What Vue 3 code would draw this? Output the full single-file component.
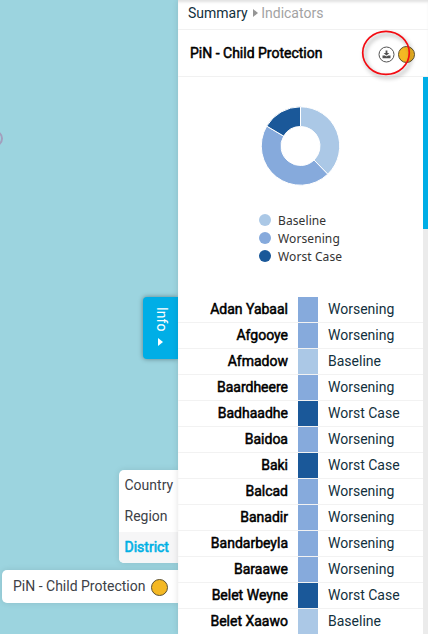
<script setup>
const levels = ['Country', 'Region', 'District']
const activeLevel = 'District'

const colors = {
  Baseline: '#abc8e6',
  Worsening: '#86aadc',
  'Worst Case': '#1a5899',
}
const legend = Object.keys(colors)

const rows = [
  ['Adan Yabaal', 'Worsening'],
  ['Afgooye', 'Worsening'],
  ['Afmadow', 'Baseline'],
  ['Baardheere', 'Worsening'],
  ['Badhaadhe', 'Worst Case'],
  ['Baidoa', 'Worsening'],
  ['Baki', 'Worst Case'],
  ['Balcad', 'Worsening'],
  ['Banadir', 'Worsening'],
  ['Bandarbeyla', 'Worsening'],
  ['Baraawe', 'Worsening'],
  ['Belet Weyne', 'Worst Case'],
  ['Belet Xaawo', 'Baseline'],
]

const point = (r, deg) => {
  const a = (deg * Math.PI) / 180
  return `${(40 + r * Math.sin(a)).toFixed(2)} ${(40 - r * Math.cos(a)).toFixed(2)}`
}
const arc = (from, to) => {
  const big = to - from > 180 ? 1 : 0
  return `M${point(39.2, from)}A39.2 39.2 0 ${big} 1 ${point(39.2, to)}L${point(19.5, to)}A19.5 19.5 0 ${big} 0 ${point(19.5, from)}Z`
}
const slices = [
  { name: 'Baseline', d: arc(0, 136) },
  { name: 'Worsening', d: arc(136, 300.5) },
  { name: 'Worst Case', d: arc(300.5, 360) },
]
</script>

<template>
  <div class="screen">
    <main class="map">
      <span class="marker"></span>
      <button class="info">
        <span>Info</span>
        <svg width="5" height="8" viewBox="0 0 5 8"><path d="M0 0L5 4L0 8z" fill="#fff" /></svg>
      </button>
      <div class="controls">
        <ul class="levels">
          <li v-for="l in levels" :key="l" :class="{ active: l === activeLevel }">{{ l }}</li>
        </ul>
        <div class="layer">
          <span>PiN - Child Protection</span>
          <i class="dot"></i>
        </div>
      </div>
    </main>

    <aside class="panel">
      <nav class="crumbs">
        <span>Summary</span>
        <svg width="5" height="8" viewBox="0 0 5 8"><path d="M0 0L5 4L0 8z" fill="#969696" /></svg>
        <span class="current">Indicators</span>
      </nav>
      <header class="title">
        <h1>PiN - Child Protection</h1>
        <svg class="download" width="17" height="17" viewBox="0 0 17 17">
          <circle cx="8.5" cy="8.5" r="7.5" fill="#fff" stroke="#555" />
          <path d="M7.6 4.5h1.8v2.4h2L8.5 9.6 5.6 6.9h2z" fill="#505050" />
          <path d="M4.5 9.6h2.4l1.6 1 1.6-1h2.4v2.6h-8z" fill="#505050" />
        </svg>
        <i class="dot"></i>
        <svg class="highlight" width="58" height="54" viewBox="0 0 58 54">
          <ellipse cx="27" cy="24.8" rx="23.3" ry="21.5" fill="none" stroke="#f30b12" stroke-width="1.7" />
        </svg>
      </header>
      <div class="body">
        <div class="content">
          <svg class="donut" width="80" height="80" viewBox="0.5 0 80 80">
            <path v-for="s in slices" :key="s.name" :d="s.d" :fill="colors[s.name]" stroke="#fff" stroke-width="1" />
          </svg>
          <ul class="legend">
            <li v-for="name in legend" :key="name">
              <i :style="{ background: colors[name] }"></i>{{ name }}
            </li>
          </ul>
          <div class="table">
            <div v-for="r in rows" :key="r[0]" class="row">
              <strong>{{ r[0] }}</strong>
              <i :style="{ background: colors[r[1]] }"></i>
              <span>{{ r[1] }}</span>
            </div>
          </div>
        </div>
        <div class="scroll"><div class="thumb"></div></div>
      </div>
    </aside>
  </div>
</template>

<style>
body {
  margin: 0;
  overflow: hidden;
}
</style>

<style scoped>
* {
  box-sizing: border-box;
}
.screen {
  display: flex;
  width: 428px;
  height: 634px;
  overflow: hidden;
  font-family: Roboto, sans-serif;
  font-size: 14px;
  color: #12303d;
}
ul {
  list-style: none;
  margin: 0;
  padding: 0;
}
.map {
  position: relative;
  width: 178px;
  background: #9cd4df;
}
.marker {
  position: absolute;
  left: -15px;
  top: 130px;
  width: 18px;
  height: 17px;
  border: 2px solid #a39fbd;
  border-radius: 50%;
}
.info {
  position: absolute;
  left: 143px;
  top: 297px;
  width: 35px;
  height: 62px;
  padding: 10px 0 0;
  display: flex;
  align-items: center;
  gap: 7px;
  writing-mode: vertical-rl;
  border: 0;
  border-radius: 4px 0 0 4px;
  background: #00aee6;
  color: #fff;
  font: 14px/35px Roboto, sans-serif;
  box-shadow: 0 0 5px rgba(0, 0, 0, 0.4);
}
.info span {
  line-height: 35px;
  position: relative;
  left: 1px;
}
.controls {
  position: absolute;
  right: 0;
  bottom: 31px;
  display: flex;
  flex-direction: column;
  align-items: flex-end;
  gap: 7px;
  color: #3d4147;
}
.levels,
.layer {
  background: #fff;
  border-radius: 5px 0 0 5px;
  box-shadow: 0 0 6px rgba(0, 0, 0, 0.1);
  overflow: hidden;
}
.levels {
  width: 59px;
}
.levels li {
  height: 31px;
  padding-left: 5.5px;
  line-height: 31px;
}
.levels .active {
  color: #00b0e4;
  background: #f6f6f7;
  -webkit-text-stroke: 0.6px;
}
.layer {
  width: 176px;
  height: 33px;
  padding: 0 10px 0 11px;
  display: flex;
  align-items: center;
  justify-content: space-between;
}
.layer span {
  margin-top: -1px;
}
.dot {
  flex: none;
  width: 17px;
  height: 17px;
  border: 1px solid #5c5132;
  border-radius: 50%;
  background: #f4b823;
}
.layer .dot {
  margin-top: 2px;
}
.panel {
  position: relative;
  width: 250px;
  display: flex;
  flex-direction: column;
  background: #fff;
  box-shadow: 0 0 6px rgba(0, 0, 0, 0.12), inset 0 3px 3px -1px rgba(0, 0, 0, 0.12);
}
.crumbs {
  display: flex;
  align-items: center;
  gap: 5px;
  height: 30px;
  padding: 0 10px 3px;
  border-bottom: 1px solid #f1f1f1;
}
.crumbs .current {
  margin-left: -1.5px;
  color: #a3a3a3;
}
.title {
  position: relative;
  display: flex;
  align-items: center;
  height: 47px;
  padding: 0 12px;
  border-bottom: 1px solid #f1f1f1;
}
.title h1 {
  flex: 1;
  margin: 0;
  font-size: 14px;
  font-weight: 400;
  color: #000;
  -webkit-text-stroke: 0.5px;
}
.download {
  margin: 2px 3px 0 0;
}
.title .dot {
  margin: 2px 1px 0 0;
}
.highlight {
  position: absolute;
  left: 181px;
  top: -2px;
  filter: drop-shadow(2px 3px 2px rgba(0, 0, 0, 0.4));
}
.body {
  display: flex;
  flex: 1;
  min-height: 0;
}
.content {
  flex: 1;
  display: flex;
  flex-direction: column;
}
.donut {
  flex: none;
  margin: 29px 0 0 83px;
}
.legend {
  margin: 25px 0 32px 81px;
  font: 12px "Noto Sans", sans-serif;
  letter-spacing: 0.1px;
  color: #333;
}
.legend li {
  display: flex;
  align-items: center;
  gap: 7px;
  height: 18px;
}
.legend i {
  width: 12px;
  height: 12px;
  border-radius: 50%;
}
.row {
  display: flex;
  height: 26px;
  line-height: 25px;
  border-bottom: 1px solid #f2f2f2;
}
.row strong {
  width: 110px;
  text-align: right;
  font-weight: 400;
  color: #000;
  -webkit-text-stroke: 0.5px;
}
.row i {
  width: 20px;
  height: 25px;
  margin: 0 10px;
}
.scroll {
  width: 5px;
  background: #ebebeb;
}
.thumb {
  height: 152px;
  background: #00aee6;
}
</style>
